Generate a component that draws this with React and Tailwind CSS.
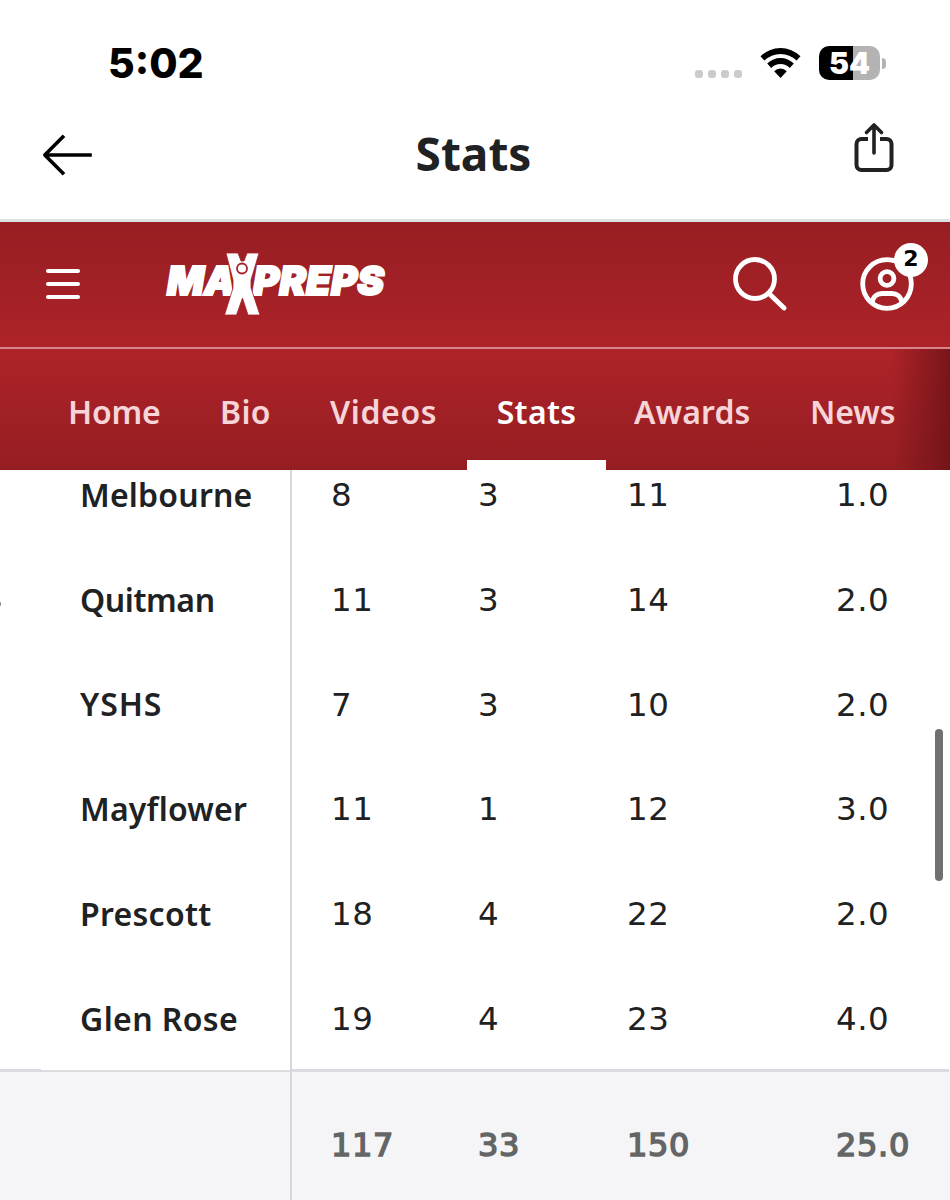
const tabs = [
  { label: "Home", style: "w-[152px] tracking-[-0.2px]" },
  { label: "Bio", style: "w-[110px] tracking-[0.3px]" },
  { label: "Videos", style: "w-[165px] tracking-[0.6px]" },
  { label: "Stats", active: true },
  { label: "Awards", style: "w-[176px] tracking-[0.1px]" },
  { label: "News", style: "w-[144px] tracking-[-0.1px]" },
];

const games = [
  { opponent: "Melbourne", tracking: "tracking-[0.2px]", stats: ["8", "3", "11", "1.0"] },
  { opponent: "Quitman", tracking: "tracking-[-0.4px]", stats: ["11", "3", "14", "2.0"] },
  { opponent: "YSHS", tracking: "tracking-[0.9px]", stats: ["7", "3", "10", "2.0"] },
  { opponent: "Mayflower", tracking: "tracking-[0.2px]", stats: ["11", "1", "12", "3.0"] },
  { opponent: "Prescott", tracking: "tracking-[0.3px]", stats: ["18", "4", "22", "2.0"] },
  { opponent: "Glen Rose", tracking: "tracking-[0.4px]", stats: ["19", "4", "23", "4.0"] },
];

const totals = ["117", "33", "150", "25.0"];

function StatusBar() {
  return (
    <div className="flex h-[108px] items-start pl-[108px] pr-[64px] pt-[38px]">
      <span className="font-['Inter',sans-serif] text-[41px] leading-[50px] font-extrabold text-black">
        5:02
      </span>
      <div className="ml-auto mt-[8px] flex items-start">
        {/* No signal */}
        <div className="mr-[18px] mt-[24px] flex gap-[5px]">
          <span className="size-2 rounded-[3px] bg-[#cbcbcb]"></span>
          <span className="size-2 rounded-[3px] bg-[#cbcbcb]"></span>
          <span className="size-2 rounded-[3px] bg-[#cbcbcb]"></span>
          <span className="size-2 rounded-[3px] bg-[#cbcbcb]"></span>
        </div>
        <svg className="mr-[18px] mt-[2px]" width="41" height="30" viewBox="0 0 41 30">
          <path d="M0.5 8.2A28.5 28.5 0 0 1 40.5 8.2L36.6 12.6A23 23 0 0 0 4.4 12.6Z" />
          <path d="M7.2 15.6A18.8 18.8 0 0 1 33.8 15.6L29.8 20A13 13 0 0 0 11.2 20Z" />
          <path d="M14.2 23.2A8.8 8.8 0 0 1 26.8 23.2L20.5 30Z" />
        </svg>
        {/* Battery */}
        <div className="flex h-[34px] w-[61px] items-center justify-center rounded-[10px] bg-linear-to-r from-black from-55% to-[#b3b3b3] to-55%">
          <span className="font-['Inter',sans-serif] text-[30px] leading-[34px] font-black text-white">
            54
          </span>
        </div>
        <span className="ml-[2px] mt-[12px] h-[11px] w-[4px] rounded-r-full bg-[#b3b3b3]"></span>
      </div>
    </div>
  );
}

function TitleBar() {
  return (
    <div className="flex h-[114px] items-start justify-between border-b-3 border-[#dfe2e2] pl-[42px] pr-[56px]">
      <svg className="mt-[25px]" width="51" height="44" viewBox="0 0 51 44" fill="none" stroke="#000" strokeWidth="3.6">
        <path d="M49.8 22H3M22 2.8L2.8 22L22 41.2" strokeLinejoin="round" />
      </svg>
      <h1 className="mt-[13px] font-['Noto_Sans',sans-serif] text-[46px] leading-[64px] font-bold text-[#202122]">
        Stats
      </h1>
      <svg className="mt-[14px]" width="40" height="52" viewBox="0 0 40 52" fill="none" stroke="#202122" strokeWidth="4" strokeLinecap="round" strokeLinejoin="round">
        <path d="M14 17H7.5A5 5 0 0 0 2.5 22V43A5 5 0 0 0 7.5 48H32.5A5 5 0 0 0 37.5 43V22A5 5 0 0 0 32.5 17H26" strokeLinecap="butt" />
        <path d="M20 31V3.5M12.5 10.5L20 3L27.5 10.5" strokeWidth="3.6" />
      </svg>
    </div>
  );
}

function Logo() {
  return (
    <svg width="222" height="66" viewBox="0 0 222 66" fill="#fff">
      <g
        fontFamily="Inter, sans-serif"
        fontSize="40"
        fontWeight="900"
        fontStyle="italic"
        stroke="#fff"
        strokeWidth="2"
      >
        <text x="2" y="42.5" textLength="68" lengthAdjust="spacingAndGlyphs">MA</text>
        <text x="88" y="42.5" textLength="131" lengthAdjust="spacingAndGlyphs">PREPS</text>
      </g>
      {/* Figure with raised arms */}
      <path
        d="M61 1H73L76 9H79L82 1H94L86 28V36L95 63H83L77.5 46L71.5 63H59.5L68 36V28Z"
        stroke="#a72027"
        strokeWidth="0.8"
      />
      <circle cx="77" cy="16.5" r="5" stroke="#a72027" strokeWidth="1.8" />
    </svg>
  );
}

function Masthead() {
  return (
    <div className="flex h-[125px] items-start bg-linear-to-b from-[#961e22] to-[#ad2329] pl-[46px] pr-[36px]">
      <div className="mt-[47px] flex w-[34px] flex-col gap-[9px]">
        <span className="h-[4px] rounded-full bg-white"></span>
        <span className="h-[4px] rounded-full bg-white"></span>
        <span className="h-[4px] rounded-full bg-white"></span>
      </div>
      <div className="ml-[85px] mt-[30px]">
        <Logo />
      </div>
      <svg className="ml-auto mt-[33px]" width="56" height="56" viewBox="0 0 56 56" fill="none" stroke="#fff" strokeWidth="4.8">
        <circle cx="23" cy="24" r="19.5" />
        <path d="M37 38.5L52 53" strokeLinecap="round" />
      </svg>
      <div className="relative ml-[72px] mt-[35px]">
        <svg width="54" height="56" viewBox="0 0 54 56" fill="none" stroke="#fff" strokeWidth="4.8">
          <circle cx="27" cy="27" r="24.3" />
          <circle cx="27" cy="21.5" r="6.9" />
          <path d="M12 46C13 39 17.5 36.5 22 36.5H32C36.5 36.5 41 39 42 46" />
        </svg>
        <span className="absolute -top-[14px] left-[34px] flex size-[34px] items-center justify-center rounded-full bg-white pb-[3px] font-['DejaVu_Sans',sans-serif] text-[22px] leading-[30px] font-bold text-black">
          2
        </span>
      </div>
    </div>
  );
}

function TabNav() {
  return (
    <nav className="relative flex h-[123px] border-t-2 border-[#d9848a] bg-linear-to-b from-[#ae2329] to-[#951e22] pl-[40px] pt-[39px] font-['Noto_Sans',sans-serif] text-[32px] leading-[48px]">
      {tabs.map((tab) =>
        tab.active ? (
          <a
            key={tab.label}
            href="#"
            className="flex w-[139px] shrink-0 justify-center border-b-10 border-white font-semibold tracking-[0.3px] text-white"
          >
            {tab.label}
          </a>
        ) : (
          <a key={tab.label} href="#" className={`shrink-0 pl-[28px] font-semibold text-[#f6d4d8] ${tab.style}`}>
            {tab.label}
          </a>
        )
      )}
      <div className="absolute right-0 top-0 h-full w-[58px] bg-linear-to-r from-transparent to-[#6c1216]/80"></div>
    </nav>
  );
}

function StatCells({ values }) {
  return (
    <div className="grid grid-cols-[147px_149px_209px_1fr] pl-[39px]">
      {values.map((value, i) => (
        <span key={i}>{value}</span>
      ))}
    </div>
  );
}

function StatsTable() {
  return (
    <div className="relative">
      <div className="h-[599px] overflow-hidden bg-white text-[#202122]">
        <div className="-mt-[27px]">
          {games.map((game) => (
            <div key={game.opponent} className="grid h-[104.8px] grid-cols-[292px_1fr]">
              <div className="flex items-center border-r-2 border-[#d6d7d8] pb-px pl-[80px] font-['Noto_Sans',sans-serif] text-[32px] font-semibold">
                <span className={game.tracking}>{game.opponent}</span>
              </div>
              <div className="flex flex-col justify-center font-['DejaVu_Sans',sans-serif] text-[32.5px] tracking-[0.5px]">
                <StatCells values={game.stats} />
              </div>
            </div>
          ))}
        </div>
      </div>

      {/* Totals */}
      <div className="grid h-[131px] grid-cols-[41px_251px_657px] bg-[#f5f5f7] text-[#646566]">
        <div className="border-t-3 border-[#dadae0]"></div>
        <div className="border-r-2 border-[#d6d7d8]">
          <div className="h-px bg-white"></div>
          <div className="h-[2px] bg-[#dadcdd]"></div>
        </div>
        <div className="border-t-3 border-[#dadae0] pt-[49px] font-['DejaVu_Sans',sans-serif] text-[32px] leading-[48px] tracking-[0.7px] [-webkit-text-stroke:1.5px_#646566]">
          <StatCells values={totals} />
        </div>
      </div>

      {/* Scroll thumb */}
      <div className="absolute right-[7px] top-[259px] h-[152px] w-[8px] rounded-full bg-[#707070]"></div>
      {/* Edge of the column scrolled out to the left */}
      <div className="absolute left-0 top-[132px] h-[4px] w-px rounded-r-full bg-[#8a8b8c]"></div>
    </div>
  );
}

function App() {
  return (
    <div className="h-[1200px] w-[950px] overflow-hidden bg-white">
      <StatusBar />
      <TitleBar />
      <Masthead />
      <TabNav />
      <StatsTable />
    </div>
  );
}

export default App;
